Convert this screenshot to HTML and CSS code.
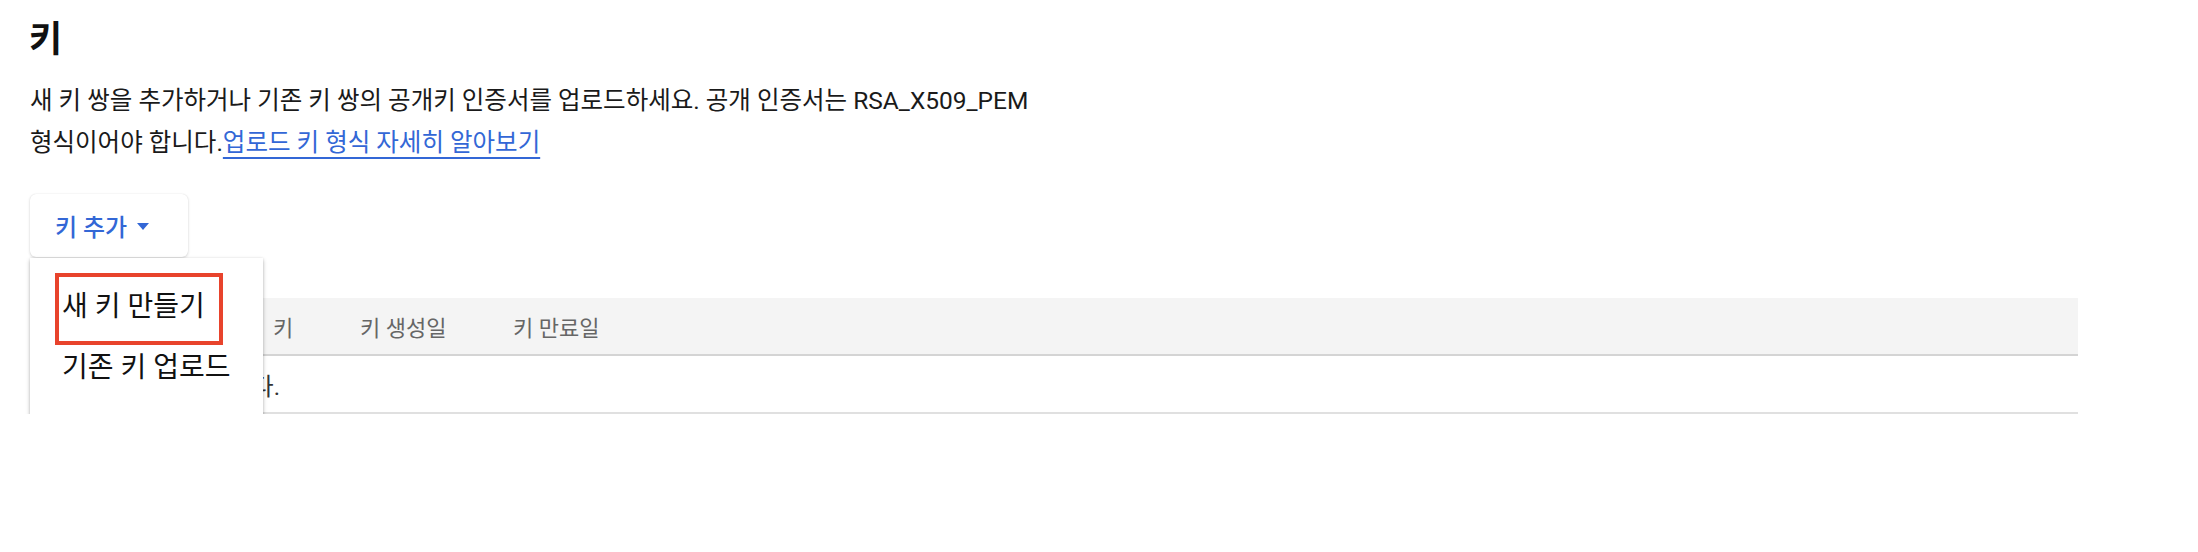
FILE: index.html
```html
<!DOCTYPE html>
<html lang="ko">
<head>
<meta charset="utf-8">
<title>키</title>
<link rel="stylesheet" href="styles.css">
</head>
<body>
<main class="page">
  <h1 class="title">키</h1>
  <p class="desc">새 키 쌍을 추가하거나 기존 키 쌍의 공개키 인증서를 업로드하세요. 공개 인증서는 RSA_X509_PEM 형식이어야 합니다.<a class="link" href="#">업로드 키 형식 자세히 알아보기</a></p>

  <div class="add-wrap">
    <button class="add-btn" type="button"><span class="add-label">키 추가</span><span class="caret"></span></button>
    <div class="menu">
      <div class="menu-item highlighted">새 키 만들기</div>
      <div class="menu-item">기존 키 업로드</div>
    </div>
  </div>

  <div class="table">
    <div class="row head">
      <div class="cell">형식</div>
      <div class="cell">키</div>
      <div class="cell">키 생성일</div>
      <div class="cell">키 만료일</div>
    </div>
    <div class="row body">
      <div class="cell empty">표시할 행이 없습니다.</div>
    </div>
  </div>
</main>
</body>
</html>
```

FILE: styles.css
```css
* { box-sizing: border-box; }

html, body {
  margin: 0;
  padding: 0;
  background: #ffffff;
}

body {
  font-family: "Roboto", "Noto Sans CJK KR", sans-serif;
  color: #202124;
}

.page {
  padding: 20px 30px 0 30px;
}

.title {
  margin: 0;
  font-size: 36px;
  line-height: 40px;
  font-weight: 700;
  color: #111111;
  margin-left: -1px;
}

.desc {
  margin: 20px 0 0 0;
  width: 1075px;
  font-size: 24.5px;
  line-height: 42px;
  color: #1a1a1a;
  word-break: keep-all;
}

.link {
  color: #3367d6;
  text-decoration: underline;
  text-decoration-thickness: 2px;
  text-underline-offset: 6px;
}

.add-wrap {
  position: relative;
  margin-top: 30px;
  width: 158px;
}

.add-btn {
  display: flex;
  align-items: center;
  height: 63px;
  width: 158px;
  padding: 0 0 0 25px;
  border: none;
  border-radius: 6px;
  background: #ffffff;
  box-shadow: 0 1px 3px rgba(0, 0, 0, 0.16), 0 0 1px rgba(0, 0, 0, 0.12);
  font-family: "Roboto", "Noto Sans CJK KR", sans-serif;
  font-size: 24px;
  font-weight: 500;
  color: #3367d6;
  cursor: pointer;
}

.caret {
  display: inline-block;
  width: 0;
  height: 0;
  margin-left: 10px;
  margin-top: 1px;
  border-left: 6.5px solid transparent;
  border-right: 6.5px solid transparent;
  border-top: 7px solid #3367d6;
}

.menu {
  position: absolute;
  top: 64px;
  left: 0;
  width: 233px;
  height: 160px;
  padding: 15px 0 0 25px;
  background: #ffffff;
  box-shadow: 0 2px 4px rgba(0, 0, 0, 0.28), 0 0 2px rgba(0, 0, 0, 0.08);
  z-index: 2;
}

.menu-item {
  font-size: 28px;
  line-height: 34px;
  color: #111111;
  padding-left: 7px;
  white-space: nowrap;
}

.menu-item.highlighted {
  width: 168px;
  height: 72px;
  padding: 13px 0 0 3px;
  border: 4px solid #e8432c;
}

.menu-item + .menu-item {
  margin-top: 6px;
}

.table {
  margin-top: 41px;
  width: 2048px;
}

.row {
  display: grid;
  grid-template-columns: 210px 87px 153px 1fr;
  align-items: center;
  height: 58px;
}

.row.head {
  background: #f4f4f4;
  border-bottom: 2px solid #d4d4d4;
  color: #666666;
  font-size: 22px;
}

.row.body {
  border-bottom: 2px solid #e0e0e0;
  color: #333333;
  font-size: 24px;
}

.cell {
  padding-left: 33px;
  white-space: nowrap;
}

.cell.empty {
  grid-column: 1 / -1;
  padding-left: 33px;
}
```
